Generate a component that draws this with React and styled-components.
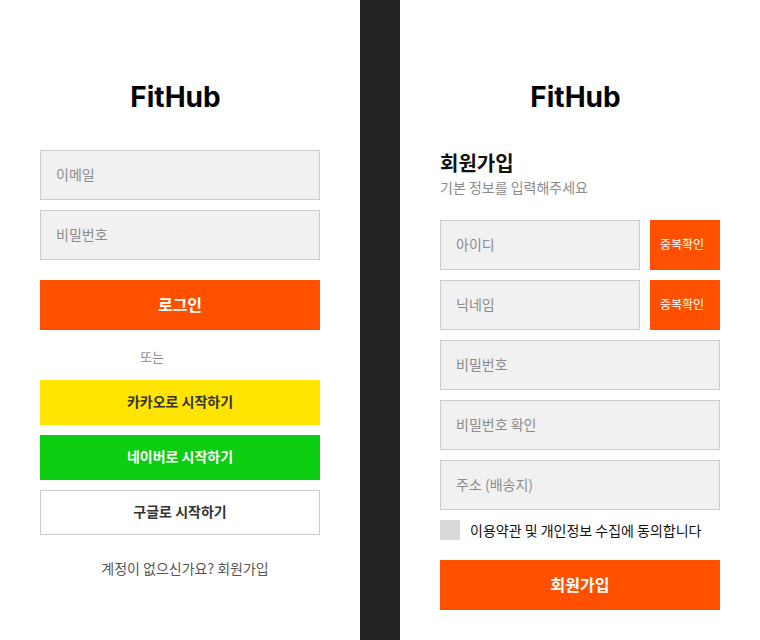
import React from 'react';
import styled, { createGlobalStyle } from 'styled-components';

const GlobalStyle = createGlobalStyle`
  html, body {
    margin: 0;
    padding: 0;
    background: #222222;
    font-family: Inter, 'Noto Sans CJK KR', sans-serif;
  }
  * {
    box-sizing: border-box;
  }
`;

const ORANGE = '#ff5000';

const Page = styled.div`
  display: flex;
  gap: 40px;
  width: 760px;
  height: 640px;
  background: #222222;
`;

const Panel = styled.div`
  width: 360px;
  height: 640px;
  background: #ffffff;
  padding: 79px 40px 0;
  display: flex;
  flex-direction: column;
`;

const Logo = styled.h1`
  margin: 0 0 35px;
  padding-right: 9px;
  text-align: center;
  font-family: Inter, sans-serif;
  font-size: 28px;
  font-weight: 700;
  line-height: 36px;
  color: #000000;
`;

const Form = styled.div`
  display: flex;
  flex-direction: column;
  gap: 10px;
`;

const Input = styled.input`
  width: 100%;
  height: 50px;
  border: 1px solid #cccccc;
  background: #f1f1f1;
  padding: 0 15px 2px;
  font-family: 'Noto Sans CJK KR', sans-serif;
  font-size: 14px;
  color: #333333;
  outline: none;
  &::placeholder {
    color: #8c8c8c;
  }
`;

const Button = styled.button`
  width: 100%;
  height: ${(p) => p.$h || 50}px;
  border: ${(p) => (p.$outline ? '1px solid #cccccc' : 'none')};
  background: ${(p) => p.$bg || ORANGE};
  color: ${(p) => p.$color || '#ffffff'};
  font-family: 'Noto Sans CJK KR', sans-serif;
  font-size: ${(p) => p.$size || 16}px;
  font-weight: 700;
  cursor: pointer;
  padding: 0 0 3px;
`;

const Divider = styled.div`
  height: 50px;
  padding: 17px 0 0 100px;
  font-family: 'Noto Sans CJK KR', sans-serif;
  font-size: 13px;
  line-height: 20px;
  color: #8c8c8c;
`;

const Footer = styled.div`
  margin-top: 23px;
  padding-left: 10px;
  text-align: center;
  font-family: 'Noto Sans CJK KR', sans-serif;
  font-size: 14px;
  line-height: 20px;
  color: #555555;
`;

const Heading = styled.h2`
  margin: 0;
  font-family: 'Noto Sans CJK KR', sans-serif;
  font-size: 20px;
  font-weight: 700;
  line-height: 26px;
  color: #111111;
`;

const Sub = styled.p`
  margin: 1px 0 23px;
  font-family: 'Noto Sans CJK KR', sans-serif;
  font-size: 14px;
  line-height: 20px;
  color: #8c8c8c;
`;

const Row = styled.div`
  display: flex;
  gap: 10px;
`;

const CheckButton = styled.button`
  flex: 0 0 70px;
  height: 50px;
  border: none;
  background: ${ORANGE};
  color: #ffffff;
  font-family: 'Noto Sans CJK KR', sans-serif;
  font-size: 12px;
  text-align: left;
  padding: 0 0 3px 10px;
`;

const Agree = styled.label`
  display: flex;
  align-items: center;
  gap: 10px;
  height: 20px;
  font-family: 'Noto Sans CJK KR', sans-serif;
  font-size: 14px;
  color: #111111;
  margin-bottom: 10px;
`;

const Box = styled.span`
  flex: 0 0 20px;
  height: 20px;
  background: #d9d9d9;
`;

const App = () => (
  <>
    <GlobalStyle />
    <Page>
      <Panel>
        <Logo>FitHub</Logo>
        <Form>
          <Input placeholder="이메일" />
          <Input type="password" placeholder="비밀번호" />
        </Form>
        <Button style={{ marginTop: 20 }}>로그인</Button>
        <Divider>또는</Divider>
        <Form>
          <Button $h={45} $size={14} $bg="#ffe500" $color="#333333">
            카카오로 시작하기
          </Button>
          <Button $h={45} $size={14} $bg="#0ccd12">
            네이버로 시작하기
          </Button>
          <Button $h={45} $size={14} $bg="#ffffff" $color="#333333" $outline>
            구글로 시작하기
          </Button>
        </Form>
        <Footer>계정이 없으신가요? 회원가입</Footer>
      </Panel>
      <Panel>
        <Logo>FitHub</Logo>
        <Heading>회원가입</Heading>
        <Sub>기본 정보를 입력해주세요</Sub>
        <Form>
          <Row>
            <Input placeholder="아이디" />
            <CheckButton>중복확인</CheckButton>
          </Row>
          <Row>
            <Input placeholder="닉네임" />
            <CheckButton>중복확인</CheckButton>
          </Row>
          <Input type="password" placeholder="비밀번호" />
          <Input type="password" placeholder="비밀번호 확인" />
          <Input placeholder="주소 (배송지)" />
          <Agree>
            <Box />
            이용약관 및 개인정보 수집에 동의합니다
          </Agree>
          <Button>회원가입</Button>
        </Form>
      </Panel>
    </Page>
  </>
);

export default App;
